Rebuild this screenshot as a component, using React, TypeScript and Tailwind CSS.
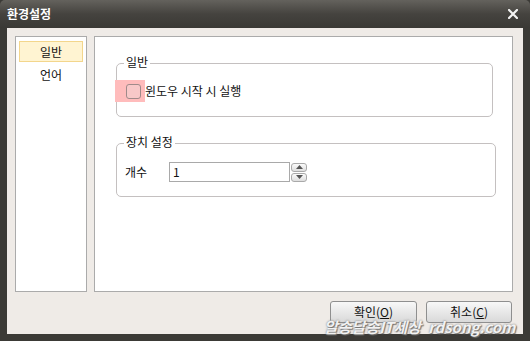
import React from "react";

const KR = { fontFamily: '"Malgun Gothic", "Noto Sans CJK KR", "Noto Sans", sans-serif' };

function Group({ title, width, children }: { title: string; width: string; children: React.ReactNode }) {
  return (
    <div className={`relative h-[54px] ${width} rounded-[5px] border border-[#c4c0c0] bg-white`}>
      <span className="absolute left-[7px] top-[-11px] bg-white px-[2px] text-[12px] leading-[18px] text-[#111]">
        {title}
      </span>
      {children}
    </div>
  );
}

function SpinButton({ up }: { up?: boolean }) {
  return (
    <div className="flex h-[9px] w-[16px] items-center justify-center rounded-[3px] border border-[#a9a9a9] bg-gradient-to-b from-[#fbfbfb] to-[#dedede]">
      <svg width="7" height="4" viewBox="0 0 7 4">
        {up ? <path d="M0 4 L3.5 0 L7 4 Z" fill="#555" /> : <path d="M0 0 L3.5 4 L7 0 Z" fill="#555" />}
      </svg>
    </div>
  );
}

function DialogButton({ label, hot }: { label: string; hot: string }) {
  return (
    <button className="flex h-[22px] w-full items-center justify-center rounded-[3px] border border-[#8f8f8f] bg-gradient-to-b from-[#f8f8f8] to-[#d9d9d9] text-[12px] text-[#111]">
      {label}(<span className="underline">{hot}</span>)
    </button>
  );
}

export default function App() {
  return (
    <div className="relative flex h-[341px] w-[530px] flex-col bg-[#3b3a36]" style={KR}>
      {/* title bar */}
      <div className="flex h-[28px] items-center justify-between rounded-t-[5px] bg-gradient-to-b from-[#64625d] via-[#45433f] to-[#3a3935] pl-[7px] pr-[12px]">
        <span className="text-[12px] font-bold text-white">환경설정</span>
        <svg width="10" height="10" viewBox="0 0 10 10">
          <path d="M1 1 L9 9 M9 1 L1 9" stroke="#f2f2f2" strokeWidth="2.2" strokeLinecap="square" />
        </svg>
      </div>

      {/* client area */}
      <div className="mx-[7px] mb-[7px] flex flex-1 flex-col bg-[#efebe7] pl-[8px] pr-[10px] pt-[8px]">
        <div className="flex h-[256px] gap-[7px]">
          {/* category list */}
          <div className="flex w-[72px] flex-col border border-[#ababab] bg-white px-[3px] pt-[4px]">
            <div className="flex h-[21px] items-center justify-center border border-[#f3d68c] bg-[#fff4d2] text-[12px] text-[#111]">
              일반
            </div>
            <div className="flex h-[25px] items-center justify-center text-[12px] text-[#111]">언어</div>
          </div>

          {/* settings panel */}
          <div className="flex w-[419px] flex-col gap-[26px] border border-[#ababab] bg-white pl-[21px] pt-[26px]">
            <Group title="일반" width="w-[377px]">
              <div className="mt-[16px] flex items-center">
                <div className="ml-[-2px] flex h-[22px] w-[30px] items-center justify-end bg-[#ffbcbc] pr-[4px]">
                  <div className="h-[15px] w-[15px] rounded-[3px] border border-[#a08a8a] bg-[#f8c8c8]" />
                </div>
                <span className="text-[12px] text-[#111]">윈도우 시작 시 실행</span>
              </div>
            </Group>

            <Group title="장치 설정" width="w-[380px]">
              <div className="mt-[18px] flex items-center pl-[8px]">
                <span className="w-[44px] text-[12px] text-[#111]">개수</span>
                <div className="flex h-[20px] w-[121px] items-center border border-[#a9a9a9] bg-white pl-[3px] text-[12px] text-[#111]">
                  1
                </div>
                <div className="ml-[1px] flex flex-col gap-[1px]">
                  <SpinButton up />
                  <SpinButton />
                </div>
              </div>
            </Group>
          </div>
        </div>

        {/* buttons */}
        <div className="mt-[9px] flex justify-end gap-[9px] pr-[1px]">
          <div className="w-[87px]">
            <DialogButton label="확인" hot="O" />
          </div>
          <div className="w-[86px]">
            <DialogButton label="취소" hot="C" />
          </div>
        </div>
      </div>

      {/* watermark */}
      <div
        className="absolute left-[324px] top-[319px] flex gap-[7px] text-[15px] font-bold italic leading-[16px] text-white/90"
        style={{ textShadow: "0 0 2px #666, 1px 1px 1px #777" }}
      >
        <span>알송달송IT세상</span>
        <span>rdsong.com</span>
      </div>
    </div>
  );
}
